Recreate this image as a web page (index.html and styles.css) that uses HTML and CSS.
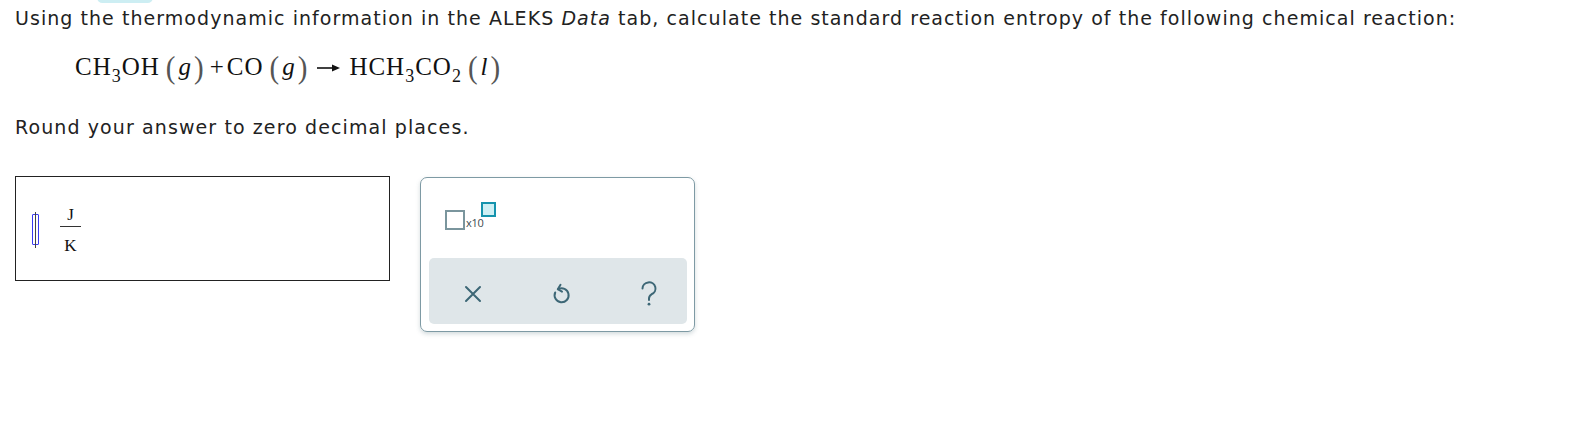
FILE: index.html
```html
<!DOCTYPE html>
<html>
<head>
<meta charset="utf-8">
<link rel="stylesheet" href="styles.css">
</head>
<body>
<div class="tab"></div>
<div class="page">
  <p class="prompt">Using the thermodynamic information in the ALEKS <i>Data</i> tab, calculate the standard reaction entropy of the following chemical reaction:</p>
  <div class="eq">
    <span class="f">CH<sub>3</sub>OH</span><span class="par">(</span><i>g</i><span class="par">)</span><span class="op">+</span><span class="f">CO</span><span class="par">(</span><i>g</i><span class="par">)</span>
    <span class="arrow"><svg width="24" height="10" viewBox="0 0 24 10"><path d="M0 5H18" stroke="#111" stroke-width="1.6"/><path d="M15 1.5L23 5L15 8.5Z" fill="#111"/></svg></span>
    <span class="f">HCH<sub>3</sub>CO<sub>2</sub></span><span class="par">(</span><i class="l">l</i><span class="par">)</span>
  </div>
  <p class="round">Round your answer to zero decimal places.</p>
  <div class="work">
    <div class="answer">
      <span class="cursor"></span>
      <span class="frac"><span class="num">J</span><span class="bar"></span><span class="den">K</span></span>
    </div>
    <div class="tools">
      <div class="top">
        <div class="sci">
          <span class="box"></span><span class="x10">x10</span><span class="exp"></span>
        </div>
      </div>
      <div class="actions">
        <button class="btn" aria-label="clear"><svg width="20" height="20" viewBox="0 0 20 20"><path d="M3 3L17 17M17 3L3 17" stroke="#3d6776" stroke-width="2" stroke-linecap="round"/></svg></button>
        <button class="btn" aria-label="undo"><svg width="20" height="22" viewBox="0 0 20 22"><path d="M7.2 6.2A7 7 0 1 1 4.2 9.5" fill="none" stroke="#3d6776" stroke-width="2" stroke-linecap="round"/><path d="M9.5 1.8L6.8 6.2L11 8.6" fill="none" stroke="#3d6776" stroke-width="2" stroke-linecap="round" stroke-linejoin="round"/></svg></button>
        <button class="btn" aria-label="help"><svg width="20" height="26" viewBox="0 0 20 26"><path d="M3.5 7.5A6.5 6.2 0 1 1 12.5 13.3C10.6 14.4 10 15.4 10 17.5V19" fill="none" stroke="#3d6776" stroke-width="2" stroke-linecap="round"/><circle cx="10" cy="23.2" r="1.4" fill="#3d6776"/></svg></button>
      </div>
    </div>
  </div>
</div>
</body>
</html>
```
FILE: styles.css
```css
html, body {
  margin: 0;
  padding: 0;
  background: #fff;
}
body {
  width: 1569px;
  height: 428px;
  overflow: hidden;
  font-family: "DejaVu Sans", Verdana, sans-serif;
  color: #222;
  position: relative;
}
.tab {
  position: absolute;
  left: 97px;
  top: -8px;
  width: 56px;
  height: 11px;
  border-radius: 6px;
  background: #cdeef3;
}
.page {
  padding: 6px 0 0 15px;
}
.prompt {
  margin: 0;
  font-size: 19px;
  line-height: 25px;
  letter-spacing: 1.05px;
}
.eq {
  margin: 17px 0 0 60px;
  font-family: "Liberation Serif", "Times New Roman", serif;
  font-size: 25px;
  color: #111;
  height: 38px;
  display: flex;
  align-items: center;
}
.eq .f {
  letter-spacing: 1px;
}
.eq sub {
  font-size: 18px;
  vertical-align: -7px;
  line-height: 0;
}
.eq i {
  font-style: italic;
}
.eq .par {
  color: #555;
  font-size: 29px;
  display: inline-block;
  transform: scaleY(1.12);
  margin: 0 2px;
}
.eq .par + i {
  margin: 0 1px;
}
.eq span + .par {
  margin-left: 6px;
}
.eq .op {
  margin: 0 3px 0 4px;
}
.eq .arrow {
  margin: 2px 8px 0 8px;
  display: inline-flex;
}
.round {
  margin: 29px 0 0;
  font-size: 19px;
  line-height: 25px;
  letter-spacing: 1.1px;
}
.work {
  margin-top: 36px;
  display: flex;
  align-items: flex-start;
}
.answer {
  width: 373px;
  height: 103px;
  border: 1px solid #222;
  display: flex;
  align-items: center;
  box-sizing: content-box;
}
.cursor {
  margin-left: 16px;
  width: 5px;
  height: 29px;
  border: 1.5px solid #3b3bf0;
  border-radius: 1px;
  position: relative;
  margin-top: 1px;
}
.cursor::after {
  content: "";
  position: absolute;
  left: 2px;
  top: -3px;
  width: 1px;
  height: 36px;
  background: #444;
}
.frac {
  margin-left: 21px;
  display: flex;
  flex-direction: column;
  align-items: center;
  font-family: "Liberation Serif", "Times New Roman", serif;
  font-size: 17px;
  color: #111;
  margin-top: 2px;
}
.frac .num, .frac .den {
  line-height: 19px;
}
.frac .bar {
  width: 21px;
  height: 1px;
  background: #333;
  margin: 2px 0 9px;
}
.tools {
  margin-left: 30px;
  margin-top: 1px;
  border: 1px solid #7e9aa4;
  border-radius: 7px;
  box-shadow: 0 2px 4px rgba(80, 110, 120, 0.25);
  display: flex;
  flex-direction: column;
  padding: 0 7px 7px 8px;
  box-sizing: border-box;
  height: 155px;
  width: 275px;
}
.top {
  height: 80px;
  position: relative;
}
.sci {
  position: absolute;
  left: 16px;
  top: 24px;
  width: 60px;
  height: 30px;
}
.sci .box {
  position: absolute;
  left: 0;
  top: 8px;
  width: 16px;
  height: 16px;
  border: 2px solid #7a959d;
  background: #fff;
}
.sci .x10 {
  position: absolute;
  left: 21px;
  top: 15px;
  font-family: "Open Sans", "DejaVu Sans", sans-serif;
  font-size: 11px;
  color: #3c4a50;
  letter-spacing: -0.3px;
  line-height: 12px;
}
.sci .exp {
  position: absolute;
  left: 36px;
  top: 0;
  width: 11px;
  height: 11px;
  border: 2px solid #1493ad;
  background: #cdeff4;
}
.actions {
  flex: 1;
  background: #dfe6e9;
  border-radius: 5px;
  display: flex;
  align-items: center;
  justify-content: space-between;
  padding: 0 27px 0 33px;
}
.btn {
  border: none;
  background: none;
  padding: 0;
  display: flex;
  align-items: center;
  justify-content: center;
  width: 22px;
  height: 30px;
  margin-top: 5px;
}
```
